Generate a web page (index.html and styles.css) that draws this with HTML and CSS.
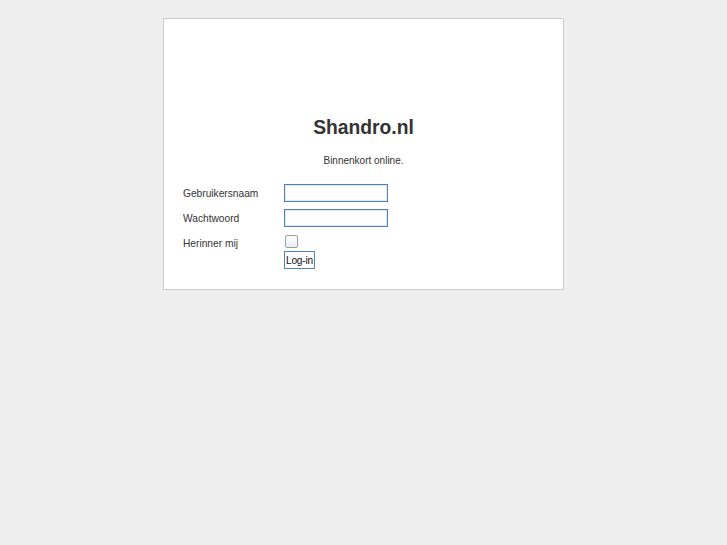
FILE: index.html
```html
<!DOCTYPE html>
<html>
<head>
<meta charset="utf-8">
<link rel="stylesheet" href="styles.css">
</head>
<body>
<div class="box">
  <h1 class="title">Shandro.nl</h1>
  <p class="sub">Binnenkort online.</p>
  <form class="form">
    <div class="row">
      <label class="label">Gebruikersnaam</label>
      <input class="field" type="text">
    </div>
    <div class="row">
      <label class="label">Wachtwoord</label>
      <input class="field" type="password">
    </div>
    <div class="row row-check">
      <label class="label label-check">Herinner mij</label>
      <span class="check"></span>
    </div>
    <div class="row row-btn">
      <span class="label"></span>
      <button class="btn" type="button">Log-in</button>
    </div>
  </form>
</div>
</body>
</html>
```

FILE: styles.css
```css
html, body {
  margin: 0;
  padding: 0;
  background: #eeeeee;
  font-family: "Liberation Sans", Arial, sans-serif;
  color: #333333;
}
.box {
  width: 399px;
  margin: 18px auto 0;
  background: #ffffff;
  border: 1px solid #cccccc;
  padding: 97px 0 20px;
  box-sizing: content-box;
}
.title {
  margin: 0;
  font-size: 19.3px;
  font-weight: bold;
  text-align: center;
  line-height: 24px;
  color: #333333;
}
.sub {
  margin: 14px 0 0;
  font-size: 10px;
  text-align: center;
  line-height: 14px;
}
.form {
  margin: 16px 0 0 19px;
  font-size: 10.2px;
}
.row {
  display: flex;
  align-items: center;
  height: 18px;
  margin-bottom: 7px;
}
.label {
  width: 101px;
  flex: none;
}
.label-check {
  padding-top: 2px;
}
.field {
  width: 104px;
  height: 18px;
  box-sizing: border-box;
  margin: 0;
  padding: 0 2px;
  border: 1px solid #4f80b8;
  box-shadow: inset 0 0 0 1px #dfe9f4;
  background: #ffffff;
  font-size: 11px;
}
.row-check {
  height: 17px;
  margin-bottom: 0;
}
.check {
  display: block;
  width: 11px;
  height: 11px;
  margin-left: 1px;
  margin-top: -3px;
  border: 1px solid #9aa0a6;
  border-radius: 2px;
  background: linear-gradient(#ffffff, #e8ecf0);
}
.row-btn {
  margin: 0;
  height: 18px;
}
.btn {
  height: 18px;
  width: 31px;
  margin: 0;
  padding: 0;
  white-space: nowrap;
  border: 1px solid #4f80b8;
  background: #ffffff;
  font-family: "Liberation Sans", Arial, sans-serif;
  font-size: 10.2px;
  letter-spacing: -0.2px;
  color: #111111;
}
```
